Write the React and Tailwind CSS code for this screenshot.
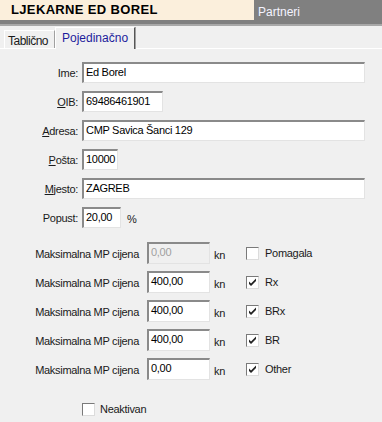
import React from 'react';

const inputCls =
  "h-[21px] bg-white border-t-2 border-l-2 border-b border-r border-t-[#8a8a8a] border-l-[#8a8a8a] border-b-[#e3e3e3] border-r-[#e3e3e3] pl-[2px] leading-[17px] text-black";

const Field = ({ label, value, width, children, underline }) => (
  <div className="flex items-center h-[21px]">
    <div className="w-[79px] text-right pr-[1px] pt-[2px]">
      {underline ? (
        <>
          <span className="underline">{label[0]}</span>
          {label.slice(1)}
        </>
      ) : (
        label
      )}
    </div>
    <div className={`ml-[3px] ${inputCls}`} style={{ width }}>
      {value}
    </div>
    {children}
  </div>
);

const CheckBox = ({ checked }) => (
  <div className="w-[13px] h-[13px] bg-white border border-t-[#7a7a7a] border-l-[#7a7a7a] border-b-[#dcdcdc] border-r-[#dcdcdc] flex items-center justify-center">
    {checked && (
      <svg width="9" height="9" viewBox="0 0 9 9">
        <path d="M1 3.5 L3 5.5 L8 0.5 L8 3 L3 8 L1 6 Z" fill="#222" />
      </svg>
    )}
  </div>
);

const PriceRow = ({ value, disabled, checked, name }) => (
  <div className="flex items-center h-[22px]">
    <div className="w-[139px] text-right pt-[3px]">Maksimalna MP cijena</div>
    <div
      className={`ml-[8px] w-[63px] h-[22px] border-t-2 border-l-2 border-b border-r border-t-[#8a8a8a] border-l-[#8a8a8a] border-b-[#e3e3e3] border-r-[#e3e3e3] pl-[2px] leading-[17px] ${
        disabled ? "bg-[#f0f0f0] text-[#a0a0a0]" : "bg-white text-black"
      }`}
    >
      {value}
    </div>
    <div className="ml-[4px] pt-[4px]">kn</div>
    <div className="ml-[21px]">
      <CheckBox checked={checked} />
    </div>
    <div className="ml-[6px] pt-[1px]">{name}</div>
  </div>
);

export default function App() {
  return (
    <div
      className="w-[382px] h-[422px] bg-[#f0f0f0] text-[11px] tracking-[-0.3px] text-[#1a1a1a] overflow-hidden"
      style={{ fontFamily: '"Liberation Sans", Arial, sans-serif' }}
    >
      {/* header */}
      <div className="h-[24px] bg-[#808080] flex items-start">
        <div className="w-[254px] h-[20px] bg-[#fbefdc] pl-[11px] flex items-center">
          <span className="text-[13px] font-bold tracking-[0.35px] text-black">LJEKARNE ED BOREL</span>
        </div>
        <div className="pl-[4px] pt-[3px] text-[12px] tracking-normal text-[#f4f4ff]">Partneri</div>
      </div>
      <div className="h-[2px] bg-[#a8a8a8]" />

      {/* tabs */}
      <div className="h-[23px] flex items-end pl-[4px] border-b border-white">
        <div className="h-[18px] w-[51px] border-t border-l border-white border-r border-r-[#a0a0a0] pl-[3px] pt-[1px] text-[12px] tracking-[-0.5px] text-[#1a1a1a]">
          Tablično
        </div>
        <div className="h-[22px] w-[80px] -mb-px bg-[#f0f0f0] border-t border-l border-white border-r border-r-[#555] shadow-[1px_0_0_#a0a0a0] pl-[6px] pt-[1px] text-[12px] tracking-normal text-[#1c1c9c]">
          Pojedinačno
        </div>
      </div>

      {/* form */}
      <div className="pt-[13px] flex flex-col gap-[8px]">
        <Field label="Ime:" value="Ed Borel" width={283} />
        <Field label="OIB:" value="69486461901" width={81} underline />
        <Field label="Adresa:" value="CMP Savica Šanci 129" width={283} underline />
        <Field label="Pošta:" value="10000" width={36} underline />
        <Field label="Mjesto:" value="ZAGREB" width={283} underline />
        <Field label="Popust:" value="20,00" width={39}>
          <span className="ml-[6px] pt-[3px]">%</span>
        </Field>
      </div>

      <div className="mt-[14px] flex flex-col gap-[7px]">
        <PriceRow value="0,00" disabled name="Pomagala" />
        <PriceRow value="400,00" checked name="Rx" />
        <PriceRow value="400,00" checked name="BRx" />
        <PriceRow value="400,00" checked name="BR" />
        <PriceRow value="0,00" checked name="Other" />
      </div>

      <div className="mt-[21px] pl-[82px] flex items-center">
        <CheckBox />
        <span className="ml-[5px]">Neaktivan</span>
      </div>
    </div>
  );
}
